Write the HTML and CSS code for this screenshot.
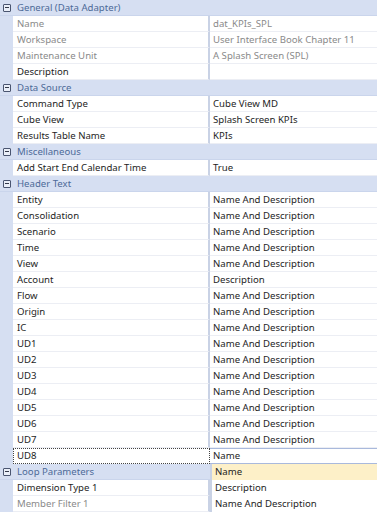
FILE: index.html
```html
<!DOCTYPE html>
<html lang="en">

<head>
    <meta charset="UTF-8">
    <meta name="viewport" content="width=device-width, initial-scale=1.0">
    <title>Data Adapter Properties</title>
    <link rel="stylesheet" href="styles.css">
</head>

<body>

    <div class="grid">
        <div class="cat"><span class="toggle"></span>General (Data Adapter)</div>
        <div class="row ro"><div class="label">Name</div><div class="value">dat_KPIs_SPL</div></div>
        <div class="row ro"><div class="label">Workspace</div><div class="value">User Interface Book Chapter 11</div></div>
        <div class="row ro"><div class="label">Maintenance Unit</div><div class="value">A Splash Screen (SPL)</div></div>
        <div class="row"><div class="label">Description</div><div class="value"></div></div>

        <div class="cat"><span class="toggle"></span>Data Source</div>
        <div class="row"><div class="label">Command Type</div><div class="value">Cube View MD</div></div>
        <div class="row"><div class="label">Cube View</div><div class="value">Splash Screen KPIs</div></div>
        <div class="row"><div class="label">Results Table Name</div><div class="value">KPIs</div></div>

        <div class="cat"><span class="toggle"></span>Miscellaneous</div>
        <div class="row"><div class="label">Add Start End Calendar Time</div><div class="value">True</div></div>

        <div class="cat"><span class="toggle"></span>Header Text</div>
        <div class="row"><div class="label">Entity</div><div class="value">Name And Description</div></div>
        <div class="row"><div class="label">Consolidation</div><div class="value">Name And Description</div></div>
        <div class="row"><div class="label">Scenario</div><div class="value">Name And Description</div></div>
        <div class="row"><div class="label">Time</div><div class="value">Name And Description</div></div>
        <div class="row"><div class="label">View</div><div class="value">Name And Description</div></div>
        <div class="row"><div class="label">Account</div><div class="value">Description</div></div>
        <div class="row"><div class="label">Flow</div><div class="value">Name And Description</div></div>
        <div class="row"><div class="label">Origin</div><div class="value">Name And Description</div></div>
        <div class="row"><div class="label">IC</div><div class="value">Name And Description</div></div>
        <div class="row"><div class="label">UD1</div><div class="value">Name And Description</div></div>
        <div class="row"><div class="label">UD2</div><div class="value">Name And Description</div></div>
        <div class="row"><div class="label">UD3</div><div class="value">Name And Description</div></div>
        <div class="row"><div class="label">UD4</div><div class="value">Name And Description</div></div>
        <div class="row"><div class="label">UD5</div><div class="value">Name And Description</div></div>
        <div class="row"><div class="label">UD6</div><div class="value">Name And Description</div></div>
        <div class="row"><div class="label">UD7</div><div class="value">Name And Description</div></div>
        <div class="row editing"><div class="label focus">UD8</div><div class="value">Name</div></div>

        <div class="cat"><span class="toggle"></span>Loop Parameters</div>
        <div class="row"><div class="label">Dimension Type 1</div><div class="value"></div></div>
        <div class="row ro"><div class="label">Member Filter 1</div><div class="value"></div></div>

        <ul class="dropdown">
            <li class="selected">Name</li>
            <li>Description</li>
            <li>Name And Description</li>
        </ul>
    </div>

</body>

</html>
```

FILE: styles.css
```css
* {
    box-sizing: border-box;
}

body {
    margin: 0;
    font-family: "Noto Sans", "Open Sans", sans-serif;
    font-size: 9.6px;
    color: #1e1e1e;
    background-color: #fff;
}

.grid {
    position: relative;
    width: 377px;
    background-color: #d6dff2;
}

.cat {
    display: flex;
    align-items: center;
    height: 16px;
    padding-left: 3px;
    background-color: #d6dff2;
    color: #4d6a98;
    border-bottom: 1px solid #cad5ec;
}

.toggle {
    position: relative;
    width: 8px;
    height: 8px;
    margin-right: 6px;
    border: 1px solid #4a5570;
    border-radius: 1px;
    background-color: #e9eef8;
}

.toggle::after {
    content: "";
    position: absolute;
    left: 1px;
    right: 1px;
    top: 2px;
    height: 1px;
    background-color: #33394a;
}

.row {
    display: flex;
    height: 16px;
    margin-left: 13px;
    background-color: #fff;
}

.label {
    width: 197px;
    padding-left: 4px;
    line-height: 16px;
    border-bottom: 1px solid #eceef4;
    border-right: 2px solid #c9d2e5;
    white-space: nowrap;
    overflow: hidden;
}

.value {
    flex: 1;
    padding-left: 3px;
    line-height: 16px;
    border-bottom: 1px solid #eceef4;
    white-space: nowrap;
}

.ro .label,
.ro .value {
    color: #8a8a8a;
}

.editing .value {
    border-top: 1px solid #a9b9dc;
    border-bottom: 1px solid #a9b9dc;
    line-height: 14px;
}

.label.focus {
    border: 1px dotted #444;
    line-height: 14px;
    padding-left: 3px;
}

.dropdown {
    position: absolute;
    left: 210px;
    top: 464px;
    width: 167px;
    margin: 0;
    padding: 0;
    list-style: none;
    background-color: #fff;
    border-left: 2px solid #c9d2e5;
}

.dropdown li {
    height: 16px;
    line-height: 16px;
    padding-left: 3px;
}

.dropdown li.selected {
    background-color: #fdf0c8;
}
```
